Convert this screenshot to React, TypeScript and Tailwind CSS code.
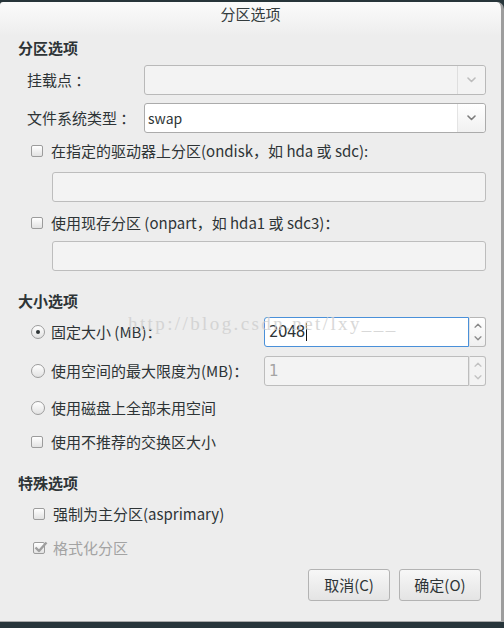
import React from "react";

const FONT = "font-['Noto_Sans_CJK_SC',sans-serif]";

function Chevron({ up = false, color = "#8a8a8a", w = 9, h = 6 }: { up?: boolean; color?: string; w?: number; h?: number }) {
  return (
    <svg width={w} height={h} viewBox="0 0 9 6" className="block">
      <polyline
        points={up ? "1,5 4.5,1.5 8,5" : "1,1 4.5,4.5 8,1"}
        fill="none"
        stroke={color}
        strokeWidth="1.6"
        strokeLinecap="round"
        strokeLinejoin="round"
      />
    </svg>
  );
}

function Combo({ value, disabled }: { value?: string; disabled?: boolean }) {
  return (
    <div
      className={`flex h-[30px] flex-1 rounded-[3px] border ${
        disabled ? "border-[#b9b9b9] bg-[#f3f3f3]" : "border-[#ababab] bg-white"
      }`}
    >
      <div className="flex flex-1 items-center pl-[3px] text-[14px] text-[#2e3436]">{value}</div>
      <div
        className={`flex w-[28px] items-center justify-center rounded-r-[3px] border-l ${
          disabled ? "border-[#dedede] bg-[#f3f3f3]" : "border-[#e4e4e4] bg-[linear-gradient(to_bottom,#ffffff,#f1f1f1)]"
        }`}
      >
        <Chevron color={disabled ? "#bdbdbd" : "#7c7c7c"} />
      </div>
    </div>
  );
}

function Entry() {
  return <div className="h-[30px] rounded-[3px] border border-[#bdbdbd] bg-[#f3f3f3]" />;
}

function Check({ checked, disabled }: { checked?: boolean; disabled?: boolean }) {
  return (
    <div className="relative flex h-[12px] w-[12px] shrink-0 items-center justify-center rounded-[2px] border border-[#9c9c9c] bg-[linear-gradient(to_bottom,#ffffff,#e2e2e2)]">
      {checked && (
        <svg width="14" height="12" viewBox="0 0 14 12" className="absolute left-[0px] top-[-2px]">
          <path d="M1.5 6.5 L5 10 L12.5 1.5" fill="none" stroke={disabled ? "#9e9e9e" : "#2e3436"} strokeWidth="2.4" strokeLinejoin="round" />
        </svg>
      )}
    </div>
  );
}

function Radio({ checked }: { checked?: boolean }) {
  return (
    <div className="flex h-[14px] w-[14px] shrink-0 items-center justify-center rounded-full border border-[#9c9c9c] bg-[linear-gradient(to_bottom,#ffffff,#e2e2e2)]">
      {checked && <div className="h-[4px] w-[4px] rounded-full bg-[#2e3436]" />}
    </div>
  );
}

function Spin({ value, focused }: { value: string; focused?: boolean }) {
  return (
    <div className="flex h-[30px] w-[222px]">
      <div
        className={`flex flex-1 items-center rounded-l-[3px] border pl-[4px] text-[15px] font-['DejaVu_Sans',sans-serif] tracking-[-0.6px] ${
          focused ? "border-[#4a90d9] bg-white text-[#2e3436]" : "border-[#bdbdbd] bg-[#f3f3f3] text-[#a4a4a4]"
        }`}
      >
        {value}
        {focused && <span className="ml-[1px] inline-block h-[18px] w-[1px] bg-[#111]" />}
      </div>
      <div
        className={`flex w-[17px] flex-col items-center justify-center gap-[8px] rounded-r-[3px] border border-l ${
          focused ? "border-[#b6b6b6] border-l-[#e2e2e2] bg-[linear-gradient(to_bottom,#ffffff,#f0f0f0)]" : "border-[#bdbdbd] border-l-[#e2e2e2] bg-[#f3f3f3]"
        }`}
      >
        <Chevron up w={8} h={5} color={focused ? "#8a8a8a" : "#c2c2c2"} />
        <Chevron w={8} h={5} color={focused ? "#8a8a8a" : "#c2c2c2"} />
      </div>
    </div>
  );
}

function Button({ children }: { children: React.ReactNode }) {
  return (
    <div className="flex h-[32px] w-[82px] items-center justify-center rounded-[3px] border border-[#b3b3b3] bg-[linear-gradient(to_bottom,#f7f7f7,#e4e4e4)] text-[15px] text-[#2e3436]">
      {children}
    </div>
  );
}

export default function App() {
  return (
    <div className={`h-[628px] w-[504px] overflow-hidden bg-[#27353a] pt-[2px] ${FONT}`}>
      <div className="relative flex h-[620px] w-[504px] flex-col rounded-tl-[3px] rounded-tr-[7px] border-r-[3px] border-b border-r-[#9d9d9d] border-b-[#a8a8a8] bg-[linear-gradient(to_bottom,#fbfbfb_0px,#ededed_34px)] text-[#2e3436]">
        {/* title */}
        <div className="flex h-[22px] items-center justify-center text-[15px] leading-none text-[#333b3d]">分区选项</div>

        <div className="flex flex-col pl-[18px] pr-[15px] text-[15px] leading-[20px]">
          <div className="mt-[14px] h-[20px] font-bold">分区选项</div>

          <div className="mt-[7px] flex h-[30px] items-center">
            <div className="w-[126px] shrink-0 pl-[9px]">挂载点 ：</div>
            <Combo disabled />
          </div>
          <div className="mt-[8px] flex h-[30px] items-center">
            <div className="w-[126px] shrink-0 pl-[9px]">文件系统类型 ：</div>
            <Combo value="swap" />
          </div>

          <div className="mt-[8px] flex h-[20px] items-center pl-[13px]">
            <Check />
            <span className="ml-[8px]">在指定的驱动器上分区(ondisk，如 hda 或 sdc):</span>
          </div>
          <div className="mt-[11px] pl-[34px]">
            <Entry />
          </div>
          <div className="mt-[11px] flex h-[20px] items-center pl-[13px]">
            <Check />
            <span className="ml-[8px]">使用现存分区 (onpart，如 hda1 或 sdc3)：</span>
          </div>
          <div className="mt-[8px] pl-[34px]">
            <Entry />
          </div>

          <div className="mt-[20px] h-[20px] font-bold">大小选项</div>

          <div className="mt-[6px] flex h-[30px] items-center pl-[13px]">
            <Radio checked />
            <span className="ml-[6px] flex-1">固定大小 (MB)：</span>
            <Spin value="2048" focused />
          </div>
          <div className="mt-[9px] flex h-[30px] items-center pl-[13px]">
            <Radio />
            <span className="ml-[6px] flex-1">使用空间的最大限度为(MB)：</span>
            <Spin value="1" />
          </div>
          <div className="mt-[12px] flex h-[20px] items-center pl-[13px]">
            <Radio />
            <span className="ml-[6px]">使用磁盘上全部未用空间</span>
          </div>
          <div className="mt-[14px] flex h-[20px] items-center pl-[13px]">
            <Check />
            <span className="ml-[8px]">使用不推荐的交换区大小</span>
          </div>

          <div className="mt-[21px] h-[20px] font-bold">特殊选项</div>

          <div className="mt-[11px] flex h-[20px] items-center pl-[15px]">
            <Check />
            <span className="ml-[8px]">强制为主分区(asprimary)</span>
          </div>
          <div className="mt-[14px] flex h-[20px] items-center pl-[15px]">
            <Check checked disabled />
            <span className="ml-[8px] text-[#a3a3a3]">格式化分区</span>
          </div>

          <div className="mt-[11px] flex justify-end gap-[9px] pr-[5px]">
            <Button>取消(C)</Button>
            <Button>确定(O)</Button>
          </div>
        </div>

        {/* watermark */}
        <div className="pointer-events-none absolute left-[128px] top-[310px] font-['Liberation_Serif',serif] text-[19px] leading-[24px] tracking-[2.4px] text-[#cfcfcf] opacity-80">
          http://blog.csdn.net/lxy___
        </div>
      </div>
    </div>
  );
}
